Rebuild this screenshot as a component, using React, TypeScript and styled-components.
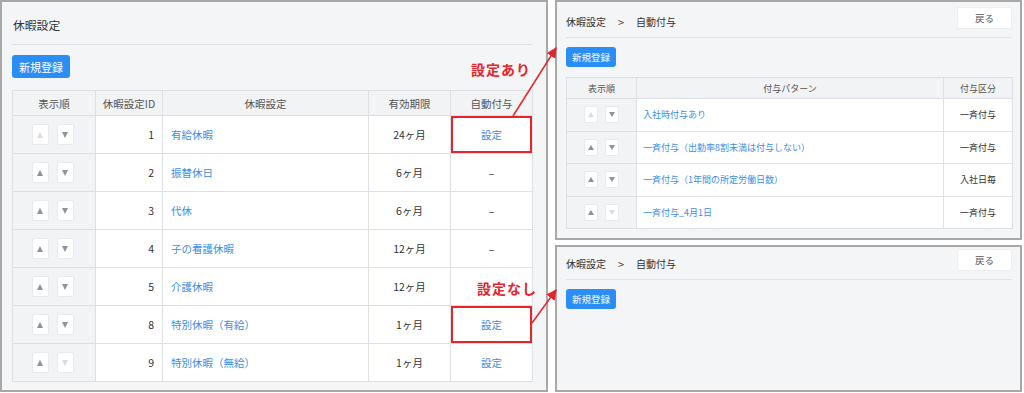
import React from 'react';
import styled, { createGlobalStyle, css } from 'styled-components';

const GlobalStyle = createGlobalStyle`
  html, body { margin: 0; padding: 0; background: #ffffff; }
  body { font-family: "Noto Sans CJK JP", "Noto Sans", sans-serif; color: #333; }
  * { box-sizing: border-box; }
`;

const RED = '#e3262b';
const BLUE_LINK = '#3b8ee3';
const LINE = '#dcdfe4';

const Page = styled.div`
  position: relative;
  display: flex;
  gap: 7px;
  width: 1024px;
  height: 393px;
`;

const Panel = styled.section<{ $pad: string }>`
  background: #f4f5f7;
  border: 2px solid #a8a8a8;
  padding: ${(p) => p.$pad};
  display: flex;
  flex-direction: column;
  align-items: flex-start;
`;

const LeftPanel = styled(Panel)`
  width: 548px;
  height: 392px;
`;

const RightColumn = styled.div`
  width: 467px;
  height: 392px;
  display: flex;
  flex-direction: column;
  gap: 5px;
`;

const TopRightPanel = styled(Panel)`
  height: 240px;
`;

const BottomRightPanel = styled(Panel)`
  flex: 1;
`;

const Title = styled.h1`
  margin: 0;
  width: 100%;
  font-size: 11.8px;
  line-height: 16px;
  font-weight: 400;
  color: #333;
  padding: 15px 0 11px 1px;
  border-bottom: 1px solid #e2e4e8;
`;

const Header = styled.div<{ $top: number; $bottom: number }>`
  width: 100%;
  display: flex;
  justify-content: space-between;
  align-items: flex-start;
  padding: ${(p) => p.$top}px 0 ${(p) => p.$bottom}px;
  border-bottom: 1px solid #e2e4e8;
`;

const Breadcrumb = styled.div`
  display: flex;
  align-items: center;
  gap: 12px;
  margin-top: 9px;
  font-size: 10px;
  line-height: 12px;
  color: #333;
`;

const Chevron = styled.span`
  font-size: 11px;
  color: #444;
`;

const BackButton = styled.button`
  width: 55px;
  height: 22px;
  border: 1px solid #eceef1;
  border-radius: 2px;
  background: #fff;
  font-family: inherit;
  font-size: 9.5px;
  color: #555;
  padding: 0;
`;

const PrimaryButton = styled.button<{ $small?: boolean }>`
  border: none;
  border-radius: 3px;
  background: #2b8ef6;
  color: #fff;
  font-family: inherit;
  padding: 0;
  ${(p) =>
    p.$small
      ? css`
          width: 50px;
          height: 20px;
          font-size: 9.5px;
          margin-top: 9px;
        `
      : css`
          width: 58px;
          height: 23px;
          font-size: 11px;
          margin-top: 10px;
        `}
`;

const Table = styled.table<{ $width: number; $top: number }>`
  width: ${(p) => p.$width}px;
  margin-top: ${(p) => p.$top}px;
  border-collapse: collapse;
  table-layout: fixed;
  background: #fff;
  border: 1px solid ${LINE};
`;

const Th = styled.th<{ $compact?: boolean }>`
  background: #f2f3f5;
  border: 1px solid ${LINE};
  font-weight: 400;
  color: #555;
  text-align: center;
  padding: 0;
  height: ${(p) => (p.$compact ? 21 : 25)}px;
  font-size: ${(p) => (p.$compact ? 9 : 10.5)}px;
`;

const Td = styled.td<{
  $compact?: boolean;
  $align?: 'left' | 'center' | 'right';
  $gray?: boolean;
  $marked?: boolean;
}>`
  border: 1px solid ${LINE};
  padding: ${(p) => (p.$compact ? '0 6px' : '0 8px')};
  height: ${(p) => (p.$compact ? 32.5 : 38)}px;
  font-size: ${(p) => (p.$compact ? 9 : 10.5)}px;
  text-align: ${(p) => p.$align ?? 'left'};
  background: ${(p) => (p.$gray ? '#f2f3f5' : '#fff')};
  color: #333;
  white-space: nowrap;
  ${(p) =>
    p.$marked &&
    css`
      box-shadow: inset 0 0 0 2px ${RED};
    `}
`;

const Link = styled.a`
  color: ${BLUE_LINK};
  text-decoration: none;
`;

const SortGroup = styled.div<{ $compact?: boolean }>`
  display: flex;
  justify-content: center;
  gap: ${(p) => (p.$compact ? 7 : 8)}px;
  padding-right: ${(p) => (p.$compact ? 0 : 3)}px;
`;

const SortButton = styled.span<{ $dir: 'up' | 'down'; $disabled?: boolean; $compact?: boolean }>`
  display: inline-flex;
  align-items: center;
  justify-content: center;
  width: ${(p) => (p.$compact ? 14 : 17)}px;
  height: ${(p) => (p.$compact ? 17 : 21)}px;
  background: #fff;
  border: 1px solid #e8eaee;
  border-radius: 2px;
  &::before {
    content: '';
    width: 0;
    height: 0;
    border-left: ${(p) => (p.$compact ? 3 : 3.5)}px solid transparent;
    border-right: ${(p) => (p.$compact ? 3 : 3.5)}px solid transparent;
    ${(p) => {
      const c = p.$disabled ? '#d9dce0' : '#8b939e';
      const h = p.$compact ? 5 : 6;
      return p.$dir === 'up'
        ? css`border-bottom: ${h}px solid ${c};`
        : css`border-top: ${h}px solid ${c};`;
    }}
  }
`;

const Note = styled.span<{ $x: number; $y: number }>`
  position: absolute;
  left: ${(p) => p.$x}px;
  top: ${(p) => p.$y}px;
  font-size: 14px;
  line-height: 18px;
  font-weight: 700;
  color: ${RED};
  letter-spacing: 1px;
  white-space: nowrap;
`;

const Overlay = styled.svg`
  position: absolute;
  left: 0;
  top: 0;
  pointer-events: none;
`;

type LeaveRow = { id: number; name: string; period: string; auto: string; marked?: boolean; link?: boolean };

const leaveRows: LeaveRow[] = [
  { id: 1, name: '有給休暇', period: '24ヶ月', auto: '設定', link: true, marked: true },
  { id: 2, name: '振替休日', period: '6ヶ月', auto: '–' },
  { id: 3, name: '代休', period: '6ヶ月', auto: '–' },
  { id: 4, name: '子の看護休暇', period: '12ヶ月', auto: '–' },
  { id: 5, name: '介護休暇', period: '12ヶ月', auto: '' },
  { id: 8, name: '特別休暇（有給）', period: '1ヶ月', auto: '設定', link: true, marked: true },
  { id: 9, name: '特別休暇（無給）', period: '1ヶ月', auto: '設定', link: true },
];

const patternRows = [
  { name: '入社時付与あり', kind: '一斉付与' },
  { name: '一斉付与（出勤率8割未満は付与しない）', kind: '一斉付与' },
  { name: '一斉付与（1年間の所定労働日数）', kind: '入社日毎' },
  { name: '一斉付与_4月1日', kind: '一斉付与' },
];

function Sorter({ index, count, compact }: { index: number; count: number; compact?: boolean }) {
  return (
    <SortGroup $compact={compact}>
      <SortButton $dir="up" $disabled={index === 0} $compact={compact} />
      <SortButton $dir="down" $disabled={index === count - 1} $compact={compact} />
    </SortGroup>
  );
}

function RightHeader({ top, bottom }: { top: number; bottom: number }) {
  return (
    <Header $top={top} $bottom={bottom}>
      <Breadcrumb>
        <span>休暇設定</span>
        <Chevron>&gt;</Chevron>
        <span>自動付与</span>
      </Breadcrumb>
      <BackButton>戻る</BackButton>
    </Header>
  );
}

export default function App() {
  return (
    <>
      <GlobalStyle />
      <Page>
        <LeftPanel $pad="0 14px 0 10px">
          <Title>休暇設定</Title>
          <PrimaryButton>新規登録</PrimaryButton>
          <Table $width={520} $top={12}>
            <colgroup>
              <col style={{ width: 83 }} />
              <col style={{ width: 67 }} />
              <col style={{ width: 206 }} />
              <col style={{ width: 82 }} />
              <col style={{ width: 82 }} />
            </colgroup>
            <thead>
              <tr>
                <Th>表示順</Th>
                <Th>休暇設定ID</Th>
                <Th>休暇設定</Th>
                <Th>有効期限</Th>
                <Th>自動付与</Th>
              </tr>
            </thead>
            <tbody>
              {leaveRows.map((r, i) => (
                <tr key={r.id}>
                  <Td $gray>
                    <Sorter index={i} count={leaveRows.length} />
                  </Td>
                  <Td $align="right">{r.id}</Td>
                  <Td>
                    <Link>{r.name}</Link>
                  </Td>
                  <Td $align="center">{r.period}</Td>
                  <Td $align="center" $marked={r.marked}>
                    {r.link ? <Link>{r.auto}</Link> : r.auto}
                  </Td>
                </tr>
              ))}
            </tbody>
          </Table>
        </LeftPanel>

        <RightColumn>
          <TopRightPanel $pad="0 8px 0 9px">
            <RightHeader top={5} bottom={8} />
            <PrimaryButton $small>新規登録</PrimaryButton>
            <Table $width={446} $top={10}>
              <colgroup>
                <col style={{ width: 70 }} />
                <col style={{ width: 307 }} />
                <col style={{ width: 69 }} />
              </colgroup>
              <thead>
                <tr>
                  <Th $compact>表示順</Th>
                  <Th $compact>付与パターン</Th>
                  <Th $compact>付与区分</Th>
                </tr>
              </thead>
              <tbody>
                {patternRows.map((r, i) => (
                  <tr key={r.name}>
                    <Td $compact $gray>
                      <Sorter index={i} count={patternRows.length} compact />
                    </Td>
                    <Td $compact>
                      <Link>{r.name}</Link>
                    </Td>
                    <Td $compact $align="center">
                      {r.kind}
                    </Td>
                  </tr>
                ))}
              </tbody>
            </Table>
          </TopRightPanel>
          <BottomRightPanel $pad="0 8px 0 9px">
            <RightHeader top={2} bottom={8} />
            <PrimaryButton $small>新規登録</PrimaryButton>
          </BottomRightPanel>
        </RightColumn>

        <Note $x={471} $y={60}>設定あり</Note>
        <Note $x={477} $y={279}>設定なし</Note>
        <Overlay width={1024} height={393} viewBox="0 0 1024 393">
          <defs>
            <marker id="head" viewBox="0 0 10 10" refX="9" refY="5" markerWidth="7" markerHeight="7" orient="auto-start-reverse">
              <path d="M0 0 L10 5 L0 10 z" fill={RED} />
            </marker>
          </defs>
          <line x1={513} y1={116} x2={556} y2={48} stroke={RED} strokeWidth={1.5} markerEnd="url(#head)" />
          <line x1={532} y1={323} x2={556} y2={290} stroke={RED} strokeWidth={1.5} markerEnd="url(#head)" />
        </Overlay>
      </Page>
    </>
  );
}
